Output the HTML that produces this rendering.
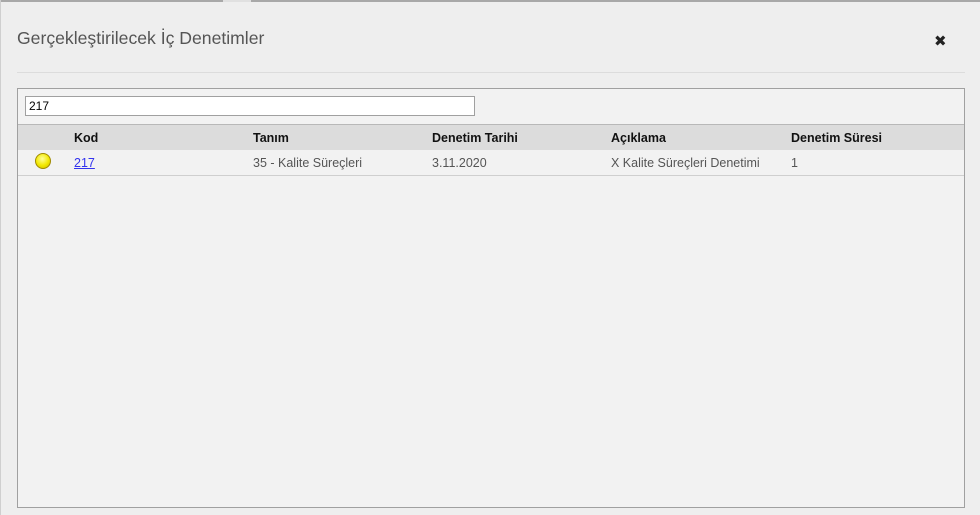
<!DOCTYPE html>
<html><head><meta charset="utf-8"><style>
body{margin:0;width:980px;height:515px;background:#eeeeee;font-family:"Liberation Sans",sans-serif;position:relative;overflow:hidden}
.top{position:absolute;left:0;top:0;width:980px;height:2px;background:#a8a8a8}
.gap{position:absolute;left:223px;top:0;width:28px;height:2px;background:#e0e0e0}
.left{position:absolute;left:0;top:0;width:1px;height:515px;background:#cfcfcf}
.title{position:absolute;left:17px;top:28px;font-size:17.6px;color:#555}
.x{position:absolute;left:934px;top:32px;font-size:15px;font-weight:bold;color:#222;font-family:"DejaVu Sans",sans-serif}
.hr{position:absolute;left:17px;top:72px;width:948px;height:1px;background:#dcdcdc}
.panel{position:absolute;left:17px;top:88px;width:946px;height:418px;border:1px solid #a0a0a0;background:#f2f2f2}
.inp{position:absolute;left:7px;top:7px;width:445px;height:18px;border:1px solid #a0a0a0;background:#fff;font-size:12px;line-height:18px;padding-left:3px;color:#000}
.hdr{position:absolute;left:0;top:35px;width:946px;height:25px;background:#dcdcdc;border-top:1px solid #b8b8b8;font-size:12.5px;font-weight:bold;color:#111}
.row{position:absolute;left:0;top:61px;width:946px;height:25px;border-bottom:1px solid #cfcfcf;font-size:12.5px;color:#555}
.c{position:absolute;top:6px}
.dot{position:absolute;left:17px;top:3px;width:16px;height:16px;border-radius:50%;background:radial-gradient(circle at 45% 35%,#ffff9a,#f2e800 55%,#c9b800);border:1px solid #a08a00;box-sizing:border-box}
a{color:#3333ee;text-decoration:underline}
</style></head><body>
<div class="top"></div><div class="gap"></div><div class="left"></div>
<div class="title">Gerçekleştirilecek İç Denetimler</div>
<div class="x">✖</div>
<div class="hr"></div>
<div class="panel">
<div class="inp">217</div>
<div class="hdr"><span class="c" style="left:56px">Kod</span><span class="c" style="left:235px">Tanım</span><span class="c" style="left:414px">Denetim Tarihi</span><span class="c" style="left:593px">Açıklama</span><span class="c" style="left:773px">Denetim Süresi</span></div>
<div class="row"><div class="dot"></div><span class="c" style="left:56px"><a>217</a></span><span class="c" style="left:235px">35 - Kalite Süreçleri</span><span class="c" style="left:414px">3.11.2020</span><span class="c" style="left:593px">X Kalite Süreçleri Denetimi</span><span class="c" style="left:773px">1</span></div>
</div>
</body></html>
